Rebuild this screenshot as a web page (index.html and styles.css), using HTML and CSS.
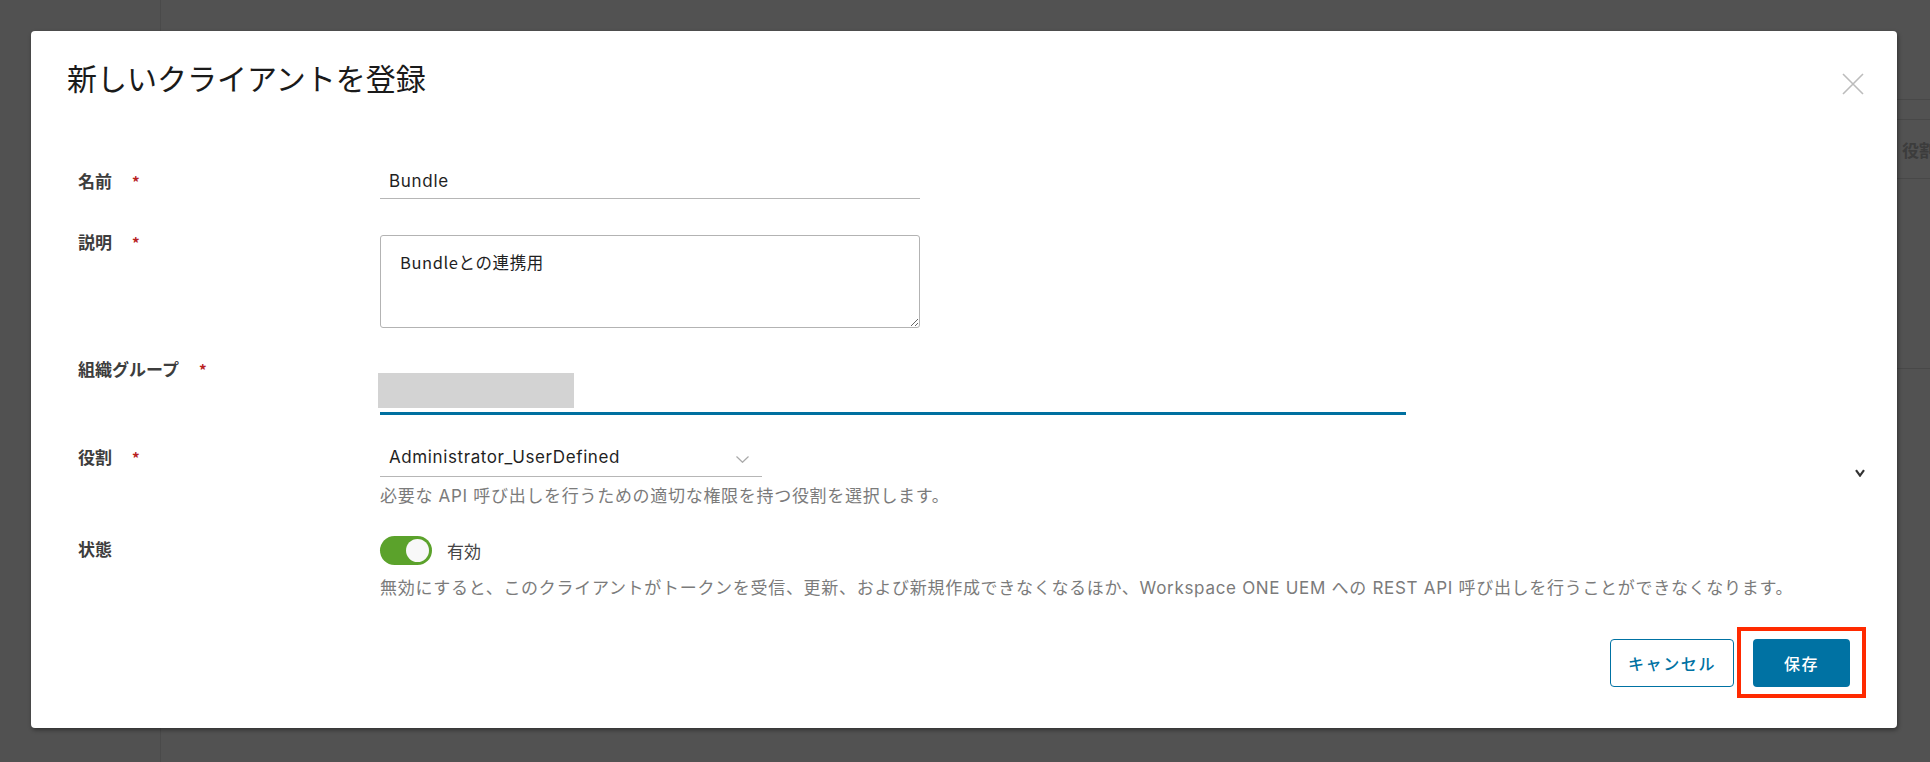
FILE: index.html
```html
<!DOCTYPE html>
<html lang="ja">
<head>
<meta charset="utf-8">
<title>新しいクライアントを登録</title>
<link rel="stylesheet" href="styles.css">
</head>
<body>
<div class="page">
  <div class="sidebar"></div>
  <div class="main">
    <div class="trow-top"></div>
    <div class="thead">
      <div class="th"></div>
      <div class="th th-label">役割</div>
    </div>
    <div class="trow"></div>
  </div>
</div>

<div class="backdrop">
  <div class="modal">
    <div class="modal-header">
      <h1 class="modal-title">新しいクライアントを登録</h1>
      <svg class="close" width="22" height="22" viewBox="0 0 22 22"><path d="M1 1L21 21M21 1L1 21" stroke="#bcbcbc" stroke-width="1.6" fill="none"/></svg>
    </div>

    <div class="form">
      <div class="row row-center">
        <div class="label">名前<span class="req">*</span></div>
        <input class="text-input" type="text" value="Bundle">
      </div>

      <div class="row row-desc">
        <div class="label">説明<span class="req">*</span></div>
        <textarea class="textarea">Bundleとの連携用</textarea>
      </div>

      <div class="row row-org">
        <div class="label">組織グループ<span class="req">*</span></div>
        <div class="field">
          <div class="org-box"></div>
          <div class="org-line"></div>
        </div>
      </div>

      <div class="row row-role">
        <div class="label">役割<span class="req">*</span></div>
        <div class="field grow">
          <div class="select">
            <span>Administrator_UserDefined</span>
            <svg class="select-chev" width="13" height="7" viewBox="0 0 13 7"><path d="M0.5 0.5L6.5 6.3L12.5 0.5" stroke="#a9a9a9" stroke-width="1.2" fill="none"/></svg>
          </div>
          <div class="helper">必要な API 呼び出しを行うための適切な権限を持つ役割を選択します。</div>
        </div>
        <svg class="mini-chev" width="10" height="8" viewBox="0 0 10 8"><path d="M1 1.2L5 6.6L9 1.2" stroke="#333" stroke-width="2.2" fill="none"/></svg>
      </div>

      <div class="row row-state">
        <div class="label label-state">状態</div>
        <div class="field grow">
          <div class="toggle-line">
            <div class="toggle"><div class="knob"></div></div>
            <span class="toggle-text">有効</span>
          </div>
          <div class="helper helper-state">無効にすると、このクライアントがトークンを受信、更新、および新規作成できなくなるほか、Workspace ONE UEM への REST API 呼び出しを行うことができなくなります。</div>
        </div>
      </div>
    </div>

    <div class="footer">
      <button class="btn btn-outline">キャンセル</button>
      <div class="save-wrap">
        <button class="btn btn-primary">保存</button>
        <div class="highlight"></div>
      </div>
    </div>
  </div>
</div>
</body>
</html>
```

FILE: styles.css
```css
* { box-sizing: border-box; }

body {
  margin: 0;
  width: 1930px;
  height: 762px;
  overflow: hidden;
  position: relative;
  background: #525252;
  font-family: "Inter", "Noto Sans CJK JP", sans-serif;
}

/* background page */
.page { display: flex; height: 762px; }
.sidebar { width: 161px; flex: none; border-right: 1px solid #4a4a4a; background: #515151; }
.main { flex: 1; padding-top: 99px; }
.trow-top { height: 20px; border-top: 1px solid #484848; }
.thead {
  height: 60px;
  border-top: 1px solid #484848;
  border-bottom: 1px solid #484848;
  display: grid;
  grid-template-columns: 1741px 1fr;
  align-items: center;
}
.th-label {
  font-family: "Noto Sans CJK JP", sans-serif;
  font-weight: 700;
  font-size: 17px;
  color: #3c3c3c;
  white-space: nowrap;
}
.trow { height: 190px; border-bottom: 1px solid #484848; }

/* modal */
.backdrop {
  position: absolute;
  inset: 0;
  padding: 31px 33px 0 31px;
}
.modal {
  background: #fff;
  border-radius: 4px;
  box-shadow: 1px 2px 4px rgba(0, 0, 0, 0.4);
  padding-bottom: 41px;
}
.modal-header {
  display: flex;
  justify-content: space-between;
  align-items: flex-start;
  padding: 28px 33px 0 36px;
}
.modal-title {
  margin: 0;
  font-family: "Noto Sans CJK JP", sans-serif;
  font-size: 30px;
  font-weight: 400;
  line-height: 36px;
  color: #1a1a1a;
}
.close { margin-top: 14px; flex: none; }

.form { padding: 68px 32px 0 47px; }
.row { display: flex; align-items: flex-start; }
.row-center { align-items: center; }
.row-desc { margin-top: 31px; }
.row-org { margin-top: 29px; }
.row-role { margin-top: 30px; }
.row-state { margin-top: 28px; }

.label {
  width: 302px;
  flex: none;
  font-family: "Noto Sans CJK JP", sans-serif;
  font-weight: 700;
  font-size: 17px;
  line-height: 24px;
  color: #3d3d3d;
}
.label-state { margin-top: 1px; }
.req { color: #b8211f; margin-left: 20px; font-weight: 700; font-size: 15px; }

.field { display: flex; flex-direction: column; }
.grow { flex: 1; }

.text-input {
  width: 540px;
  height: 36px;
  border: none;
  border-bottom: 1px solid #b6b6b6;
  padding: 6px 0 5px 9px;
  font-family: "Inter", "Noto Sans CJK JP", sans-serif;
  font-size: 17px;
  letter-spacing: 0.7px;
  line-height: 24px;
  color: #1f1f1f;
  outline: none;
  background: #fff;
}

.textarea {
  margin-top: 5px;
  width: 540px;
  height: 93px;
  border: 1px solid #b3b3b3;
  border-radius: 3px;
  padding: 14px 19px;
  font-family: "Noto Sans CJK JP", sans-serif;
  font-size: 16.5px;
  letter-spacing: 0.6px;
  line-height: 24px;
  color: #1f1f1f;
  outline: none;
  resize: both;
}

.org-box {
  margin: 16px 0 0 -2px;
  width: 196px;
  height: 35px;
  background: #d3d3d3;
}
.org-line {
  margin-top: 4px;
  width: 1026px;
  height: 3px;
  background: #0070a0;
}

.select {
  width: 382px;
  height: 32px;
  border-bottom: 1px solid #b6b6b6;
  display: flex;
  justify-content: space-between;
  align-items: flex-start;
  padding: 0 13px 0 9px;
  font-size: 17px;
  letter-spacing: 0.6px;
  line-height: 24px;
  color: #1f1f1f;
}
.select-chev { margin-top: 11px; }

.helper {
  margin-top: 7px;
  font-size: 17px;
  letter-spacing: 0.7px;
  line-height: 24px;
  color: #7b7b7b;
  white-space: nowrap;
}
.helper-state { margin-top: 11px; }

.mini-chev { margin-top: 24px; flex: none; }

.toggle-line { display: flex; align-items: center; }
.toggle {
  width: 52px;
  height: 29px;
  border-radius: 15px;
  background: #5ba22b;
  display: flex;
  align-items: center;
  justify-content: flex-end;
  padding-right: 3px;
}
.knob {
  width: 23px;
  height: 23px;
  border-radius: 50%;
  background: #f8f8f8;
}
.toggle-text {
  margin-left: 15px;
  font-family: "Noto Sans CJK JP", sans-serif;
  font-size: 17px;
  line-height: 24px;
  color: #444;
}

.footer {
  display: flex;
  justify-content: flex-end;
  gap: 19px;
  padding: 39px 47px 0 0;
}
.btn {
  height: 48px;
  border-radius: 4px;
  font-family: "Noto Sans CJK JP", sans-serif;
  font-size: 16px;
  font-weight: 500;
  letter-spacing: 1.6px;
  cursor: pointer;
}
.btn-outline {
  width: 124px;
  background: #fff;
  border: 1px solid #0072a3;
  color: #0072a3;
}
.btn-primary {
  width: 97px;
  background: #0072a3;
  border: none;
  color: #fff;
}
.save-wrap { position: relative; display: flex; }
.highlight {
  position: absolute;
  top: -12px;
  bottom: -11px;
  left: -16px;
  right: -16px;
  border: 4px solid #ff2a00;
}
```
